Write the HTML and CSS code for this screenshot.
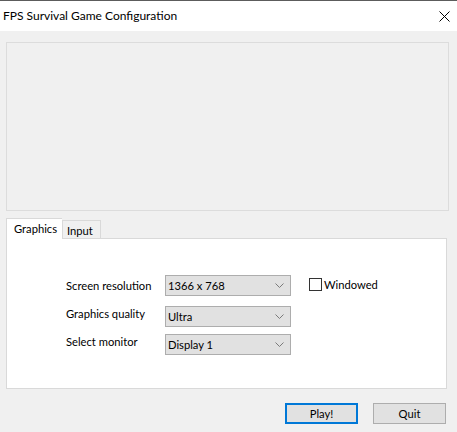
FILE: index.html
```html
<!DOCTYPE html>
<html>
<head>
<meta charset="utf-8">
<link rel="stylesheet" href="styles.css">
</head>
<body>
<div class="window">
  <div class="topline"></div>
  <div class="titlebar">
    <span class="title">FPS Survival Game Configuration</span>
    <svg class="close" width="11" height="11" viewBox="0 0 11 11"><path d="M0.5 0.5 L10.5 10.5 M10.5 0.5 L0.5 10.5" stroke="#000" stroke-width="1" fill="none"/></svg>
  </div>
  <div class="client">
    <div class="preview"></div>
    <div class="tabs">
      <div class="tab active">Graphics</div>
      <div class="tab">Input</div>
    </div>
    <div class="tabpanel">
      <div class="form">
        <div class="label l1">Screen resolution</div>
        <div class="combo"><span>1366 x 768</span><svg width="9" height="5" viewBox="0 0 9 5"><path d="M0.5 0.5 L4.5 4.5 L8.5 0.5" stroke="#7a7a7a" fill="none"/></svg></div>
        <label class="check"><span class="box"></span><span>Windowed</span></label>
        <div class="label l2">Graphics quality</div>
        <div class="combo"><span>Ultra</span><svg width="9" height="5" viewBox="0 0 9 5"><path d="M0.5 0.5 L4.5 4.5 L8.5 0.5" stroke="#7a7a7a" fill="none"/></svg></div>
        <div></div>
        <div class="label l3">Select monitor</div>
        <div class="combo"><span>Display 1</span><svg width="9" height="5" viewBox="0 0 9 5"><path d="M0.5 0.5 L4.5 4.5 L8.5 0.5" stroke="#7a7a7a" fill="none"/></svg></div>
        <div></div>
      </div>
    </div>
    <div class="buttons">
      <button class="btn primary">Play!</button>
      <button class="btn">Quit</button>
    </div>
  </div>
</div>
</body>
</html>
```

FILE: styles.css
```css
* { box-sizing: border-box; }
html, body { margin: 0; padding: 0; }
body {
  width: 457px;
  height: 432px;
  overflow: hidden;
  font-family: Lato, "Noto Sans", sans-serif;
  font-size: 11.2px;
  color: #000;
  background: #f0f0f0;
}
.window { display: flex; flex-direction: column; height: 432px; }
.topline { height: 1px; background: #5c5c5c; }
.titlebar {
  height: 30px;
  background: #fff;
  display: flex;
  align-items: center;
  justify-content: space-between;
  padding: 0 7px 0 3px;
}
.title { font-size: 12px; line-height: 16px; margin-top: -1px; }
.client {
  flex: 1;
  background: #f0f0f0;
  display: flex;
  flex-direction: column;
  padding: 11px 8px 0 6px;
}
.preview {
  height: 169px;
  width: 443px;
  border: 1px solid #dcdcdc;
}
.tabs {
  display: flex;
  align-items: flex-end;
  margin-top: 7px;
  height: 20px;
  position: relative;
  z-index: 1;
}
.tab {
  height: 18px;
  border: 1px solid #d9d9d9;
  border-bottom: none;
  line-height: 16px;
  background: #f0f0f0;
}
.tab.active {
  height: 21px;
  margin-bottom: -1px;
  background: #fff;
  padding: 2px 0 0 7px;
  width: 56px;
  border-right: none;
}
.tab:not(.active) { width: 39px; padding: 2px 0 0 4px; }
.tabpanel {
  width: 441px;
  height: 151px;
  background: #fff;
  border: 1px solid #d9d9d9;
}
.form {
  display: grid;
  grid-template-columns: 99px 126px auto;
  grid-template-rows: 31px 28px 21px;
  padding: 36px 0 0 59px;
}
.label { line-height: 16px; }
.l1 { padding-top: 3px; }
.l2 { padding-top: 0px; }
.l3 { padding-top: 0px; }
.combo {
  height: 21px;
  background: #e1e1e1;
  border: 1px solid #adadad;
  display: flex;
  align-items: center;
  justify-content: space-between;
  padding: 0 6px 0 2px;
  line-height: 16px;
}
.check {
  display: flex;
  align-items: center;
  margin-left: 18px;
  height: 16px;
  margin-top: 1px;
}
.box {
  width: 13px;
  height: 13px;
  border: 1px solid #333;
  background: #fff;
  margin-right: 2px;
}
.buttons {
  display: flex;
  justify-content: flex-end;
  gap: 15px;
  margin-top: 14px;
  padding-right: 3px;
}
.btn {
  width: 73px;
  height: 21px;
  background: #e1e1e1;
  border: 1px solid #adadad;
  font-family: inherit;
  font-size: 11.2px;
  color: #000;
  padding: 0;
  margin: 0;
  line-height: 16px;
}
.btn.primary { border: 2px solid #0078d7; }
```
